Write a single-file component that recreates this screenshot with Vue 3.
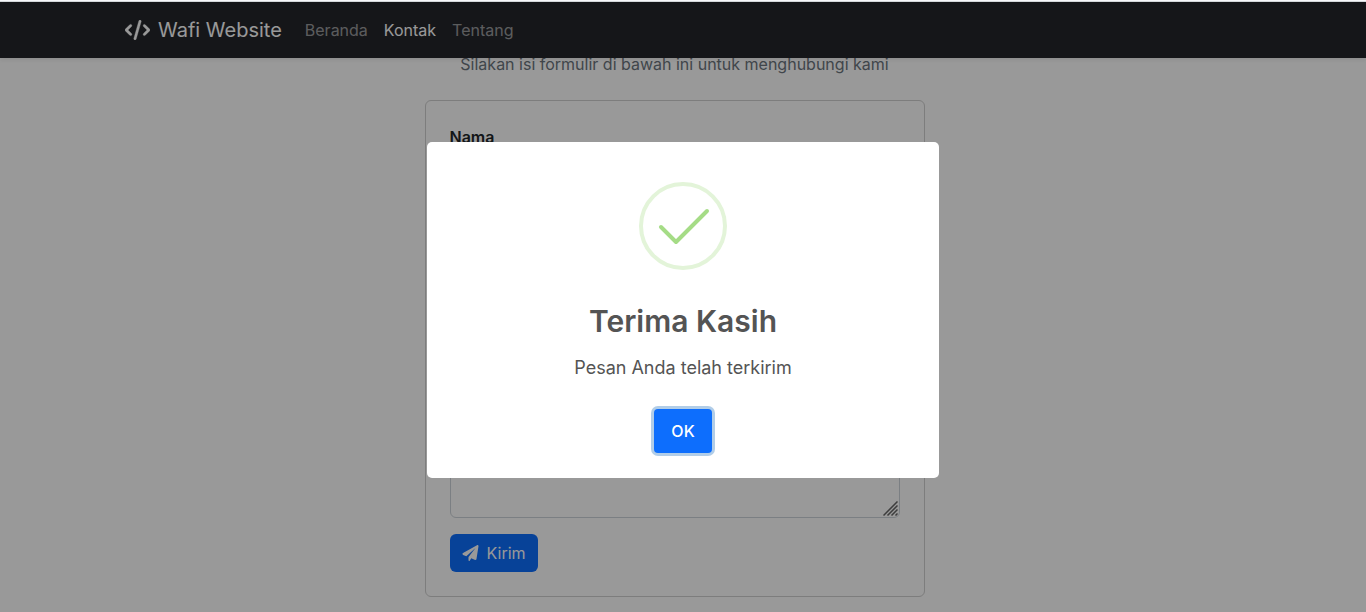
<script setup>
import { ref } from 'vue'

const links = [
  { label: 'Beranda', active: false },
  { label: 'Kontak', active: true },
  { label: 'Tentang', active: false },
]
const open = ref(true)
</script>

<template>
  <div class="page">
    <header class="navbar">
      <nav class="container">
        <a class="brand" href="#">
          <svg class="brand-icon" viewBox="0 0 640 512" aria-hidden="true">
            <path d="M414.800 40.790L286.800 488.800C281.900 505.800 264.200 515.600 247.200 510.800C230.200 505.900 220.400 488.200 225.200 471.200L353.200 23.210C358.100 6.216 375.800-3.624 392.800 1.232C409.800 6.087 419.600 23.800 414.800 40.790H414.800zM518.600 121.400L630.600 233.400C643.100 245.900 643.100 266.100 630.600 278.600L518.600 390.600C506.100 403.100 485.900 403.100 473.400 390.600C460.900 378.100 460.900 357.900 473.400 345.400L562.700 256L473.400 166.600C460.900 154.100 460.900 133.900 473.400 121.400C485.900 108.900 506.100 108.900 518.600 121.400V121.400zM166.600 166.600L77.250 256L166.600 345.400C179.100 357.900 179.100 378.100 166.600 390.600C154.100 403.100 133.900 403.100 121.400 390.600L9.372 278.600C-3.124 266.100-3.124 245.900 9.372 233.400L121.400 121.400C133.900 108.900 154.100 108.900 166.600 121.400C179.100 133.900 179.100 154.100 166.600 166.600V166.600z" />
          </svg>
          <span>Wafi Website</span>
        </a>
        <ul class="menu">
          <li v-for="link in links" :key="link.label">
            <a href="#" :class="{ active: link.active }">{{ link.label }}</a>
          </li>
        </ul>
      </nav>
    </header>

    <main class="content">
      <p class="lead">Silakan isi formulir di bawah ini untuk menghubungi kami</p>
      <form class="card" @submit.prevent="open = true">
        <div class="field">
          <label for="nama">Nama</label>
          <input id="nama" type="text" />
        </div>
        <div class="field">
          <label for="email">Email</label>
          <input id="email" type="email" />
        </div>
        <div class="field">
          <label for="pesan">Pesan</label>
          <div class="area">
            <textarea id="pesan"></textarea>
            <svg class="grip" viewBox="0 0 15 15" aria-hidden="true">
              <path d="M0.500 14.500L14.500 0.500M4.500 14.500L14.500 4.500M8.500 14.500L14.500 8.500M12.500 14.500L14.500 12.500" />
            </svg>
          </div>
        </div>
        <button class="submit" type="submit">
          <svg viewBox="0 0 512 512" aria-hidden="true">
            <path d="M511.600 36.860l-64 415.100c-1.500 9.734-7.375 18.220-15.970 23.050c-4.844 2.719-10.270 4.097-15.680 4.097c-4.188 0-8.319-.8154-12.290-2.472l-122.600-51.100l-50.860 76.290C226.300 508.500 219.800 512 212.800 512C201.300 512 192 502.700 192 491.200v-96.180c0-7.115 2.372-14.030 6.742-19.640L416 96l-293.700 264.300L19.690 317.500C8.438 312.800 .8125 302.200 .0625 289.100s5.469-23.720 16.060-29.770l448-255.100c10.690-6.109 23.880-5.547 34 1.406S513.500 24.720 511.600 36.860z" />
          </svg>
          <span>Kirim</span>
        </button>
      </form>
    </main>

    <div v-if="open" class="backdrop">
      <section class="dialog" role="dialog" aria-modal="true" aria-labelledby="dialog-title">
        <svg class="success" viewBox="0 0 88 88" aria-hidden="true">
          <circle cx="44" cy="44" r="42" />
          <path d="M22 45L37 60L68 29" />
        </svg>
        <h2 id="dialog-title">Terima Kasih</h2>
        <p>Pesan Anda telah terkirim</p>
        <button class="confirm" type="button" @click="open = false">OK</button>
      </section>
    </div>
  </div>
</template>

<style>
body {
  margin: 0;
  border-top: 1px solid #f7f8fa;
}
</style>

<style scoped>
* {
  box-sizing: border-box;
}

.page {
  position: relative;
  height: calc(100vh - 1px);
  overflow: hidden;
  border-top: 1px solid #d3d7da;
  background: #fff;
  color: #212529;
  font: 16px/24px Inter, "Liberation Sans", sans-serif;
}

.navbar {
  position: absolute;
  inset: 0 0 auto;
  z-index: 1;
  background: #24262b;
  box-shadow: 0 2px 4px rgba(0, 0, 0, 0.075);
}

.container {
  display: flex;
  align-items: center;
  max-width: 1140px;
  height: 56px;
  margin: 0 auto;
  padding: 0 12px;
}

.brand {
  display: flex;
  align-items: center;
  gap: 8px;
  margin-right: 15px;
  color: #fff;
  font-size: 20px;
  line-height: 30px;
  text-decoration: none;
}

.brand-icon {
  width: 25px;
  height: 20px;
  fill: currentColor;
  stroke: currentColor;
  stroke-width: 8;
}

.menu {
  display: flex;
  margin: 0;
  padding: 0;
  list-style: none;
}

.menu a {
  display: block;
  padding: 8px;
  color: rgba(255, 255, 255, 0.55);
  text-decoration: none;
}

.menu .active {
  color: #fff;
}

.content {
  padding: 50px 17px 0 0;
}

.lead {
  margin: 0 0 24px;
  color: #6c757d;
  text-align: center;
}

.card {
  max-width: 500px;
  margin: 0 auto;
  padding: 24px;
  border: 1px solid #d0d0d0;
  border-radius: 6px;
}

.field {
  margin-bottom: 16px;
}

.field label {
  display: block;
  margin-bottom: 8px;
  font-weight: 600;
}

.field input,
.field textarea {
  display: block;
  width: 100%;
  height: 38px;
  padding: 6px 12px;
  border: 1px solid #ced4da;
  border-radius: 6px;
  background: #fff;
  font: inherit;
}

.area {
  position: relative;
}

.field textarea {
  height: 189px;
  resize: none;
}

.grip {
  position: absolute;
  right: 2px;
  bottom: 2px;
  width: 15px;
  height: 15px;
  fill: none;
  stroke: #666;
  stroke-width: 1.5;
}

.submit {
  display: flex;
  align-items: center;
  gap: 8px;
  padding: 7px 12px;
  border: 0;
  border-radius: 6px;
  background: #0d6efd;
  color: #fff;
  font: inherit;
}

.submit svg {
  width: 17px;
  height: 16px;
  fill: currentColor;
}

.backdrop {
  position: absolute;
  inset: 0;
  z-index: 2;
  display: flex;
  align-items: center;
  justify-content: center;
  padding-top: 6px;
  background: rgba(0, 0, 0, 0.4);
}

.dialog {
  display: flex;
  flex-direction: column;
  align-items: center;
  width: 512px;
  max-width: 100%;
  padding: 40px 0 25px;
  border-radius: 5px;
  background: #fff;
  color: #545454;
}

.success {
  width: 88px;
  height: 88px;
  fill: none;
  stroke-width: 4;
}

.success circle {
  stroke: #e3f4d9;
}

.success path {
  stroke: #a5dc86;
  stroke-linecap: round;
  stroke-linejoin: round;
}

.dialog h2 {
  margin: 31px 0 0;
  font-size: 30px;
  font-weight: 600;
  line-height: 40px;
}

.dialog p {
  margin: 13px 0 0;
  font-size: 18px;
  line-height: 28px;
}

.confirm {
  margin: 27px 0 0;
  padding: 10px 17px;
  border: 0;
  border-radius: 4px;
  background: #0d6efd;
  box-shadow: 0 0 0 3px #b1cde8;
  color: #fff;
  font: 500 16px/24px Inter, "Liberation Sans", sans-serif;
}
</style>
